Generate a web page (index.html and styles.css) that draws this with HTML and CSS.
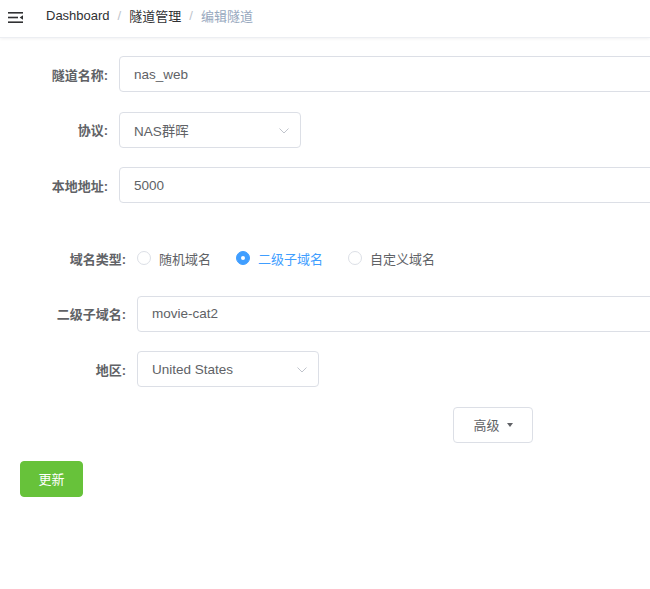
FILE: index.html
```html
<!DOCTYPE html>
<html lang="zh-CN">
<head>
<meta charset="utf-8">
<title>编辑隧道</title>
<link rel="stylesheet" href="styles.css">
</head>
<body>
<header class="navbar">
  <svg class="hamburger" width="16" height="13" viewBox="0 0 16 13">
    <rect x="0" y="1" width="15" height="1.6" fill="#303133"/>
    <rect x="0" y="5.7" width="10" height="1.6" fill="#303133"/>
    <rect x="0" y="10.4" width="15" height="1.6" fill="#303133"/>
    <polygon points="15,4.2 15,8.8 11.6,6.5" fill="#303133"/>
  </svg>
  <nav class="breadcrumb">
    <span class="crumb">Dashboard</span>
    <span class="sep">/</span>
    <span class="crumb">隧道管理</span>
    <span class="sep">/</span>
    <span class="crumb current">编辑隧道</span>
  </nav>
</header>

<main class="form">
  <div class="item">
    <label class="label">隧道名称:</label>
    <div class="input wide">nas_web</div>
  </div>
  <div class="item">
    <label class="label">协议:</label>
    <div class="input select">NAS群晖
      <svg class="chev" width="10" height="6" viewBox="0 0 10 6"><polyline points="0.5,0.5 5,5 9.5,0.5" fill="none" stroke="#c0c4cc" stroke-width="1"/></svg>
    </div>
  </div>
  <div class="item">
    <label class="label">本地地址:</label>
    <div class="input wide">5000</div>
  </div>

  <div class="item gap-top">
    <label class="label l2">域名类型:</label>
    <div class="radios">
      <span class="radio"><span class="dot"></span><span class="rtext">随机域名</span></span>
      <span class="radio checked"><span class="dot"></span><span class="rtext">二级子域名</span></span>
      <span class="radio"><span class="dot"></span><span class="rtext">自定义域名</span></span>
    </div>
  </div>
  <div class="item">
    <label class="label l2">二级子域名:</label>
    <div class="input wide">movie-cat2</div>
  </div>
  <div class="item">
    <label class="label l2">地区:</label>
    <div class="input select">United States
      <svg class="chev" width="10" height="6" viewBox="0 0 10 6"><polyline points="0.5,0.5 5,5 9.5,0.5" fill="none" stroke="#c0c4cc" stroke-width="1"/></svg>
    </div>
  </div>

  <div class="adv-row">
    <button class="btn adv">高级 <span class="caret"></span></button>
  </div>
  <div class="submit-row">
    <button class="btn primary">更新</button>
  </div>
</main>
</body>
</html>
```

FILE: styles.css
```css
html, body {
  margin: 0;
  padding: 0;
  background: #fff;
  overflow: hidden;
  font-family: "Liberation Sans", "Noto Sans CJK SC", sans-serif;
  font-size: 13px;
  color: #606266;
}

.navbar {
  height: 37px;
  border-bottom: 1px solid #eceef2;
  box-shadow: 0 1px 3px rgba(0, 21, 41, 0.06);
  display: flex;
  align-items: center;
}

.hamburger {
  margin-left: 8px;
  margin-top: -3px;
}

.breadcrumb {
  margin-left: 22px;
  margin-top: -7px;
  display: flex;
  align-items: center;
  font-size: 13px;
}

.crumb {
  color: #303133;
}

.crumb.current {
  color: #97a8be;
}

.sep {
  color: #c0c4cc;
  margin: 0 8px;
}

.form {
  padding: 18px 0 0 19px;
}

.item {
  display: flex;
  align-items: center;
  height: 36px;
  margin-bottom: 19.5px;
}

.item.gap-top {
  margin-top: 37px;
}

.label {
  width: 89px;
  padding-right: 11px;
  text-align: right;
  color: #606266;
  font-weight: 700;
  flex: none;
}

.label.l2 {
  width: 107px;
}

.input {
  box-sizing: border-box;
  height: 36px;
  border: 1px solid #dcdfe6;
  border-radius: 4px;
  padding: 0 14px;
  display: flex;
  align-items: center;
  color: #606266;
  font-size: 13.5px;
  flex: none;
}

.input.wide {
  width: 600px;
}

.input.select {
  width: 182px;
  position: relative;
}

.chev {
  position: absolute;
  right: 11px;
  top: 15px;
}

.radios {
  display: flex;
  align-items: center;
}

.radio {
  display: flex;
  align-items: center;
  margin-right: 25px;
  color: #606266;
}

.dot {
  box-sizing: border-box;
  width: 14px;
  height: 14px;
  border: 1px solid #dcdfe6;
  border-radius: 50%;
  margin-right: 8px;
  position: relative;
}

.radio.checked .dot {
  background: #409eff;
  border-color: #409eff;
}

.radio.checked .dot::after {
  content: "";
  position: absolute;
  width: 4px;
  height: 4px;
  border-radius: 50%;
  background: #fff;
  left: 4px;
  top: 4px;
}

.radio.checked .rtext {
  color: #409eff;
}

.adv-row {
  padding-left: 434px;
  height: 36px;
  margin-bottom: 18px;
}

.btn {
  box-sizing: border-box;
  height: 36px;
  border-radius: 4px;
  font-family: inherit;
  font-size: 13px;
  cursor: pointer;
  display: inline-flex;
  align-items: center;
  justify-content: center;
}

.btn.adv {
  width: 80px;
  background: #fff;
  border: 1px solid #dcdfe6;
  color: #606266;
  padding: 0;
}

.caret {
  display: inline-block;
  width: 0;
  height: 0;
  border-left: 3.5px solid transparent;
  border-right: 3.5px solid transparent;
  border-top: 4px solid #606266;
  margin-left: 7px;
}

.submit-row {
  padding-left: 1px;
}

.btn.primary {
  width: 63px;
  background: #67c23a;
  border: 1px solid #67c23a;
  color: #fff;
  padding: 0;
}
```
